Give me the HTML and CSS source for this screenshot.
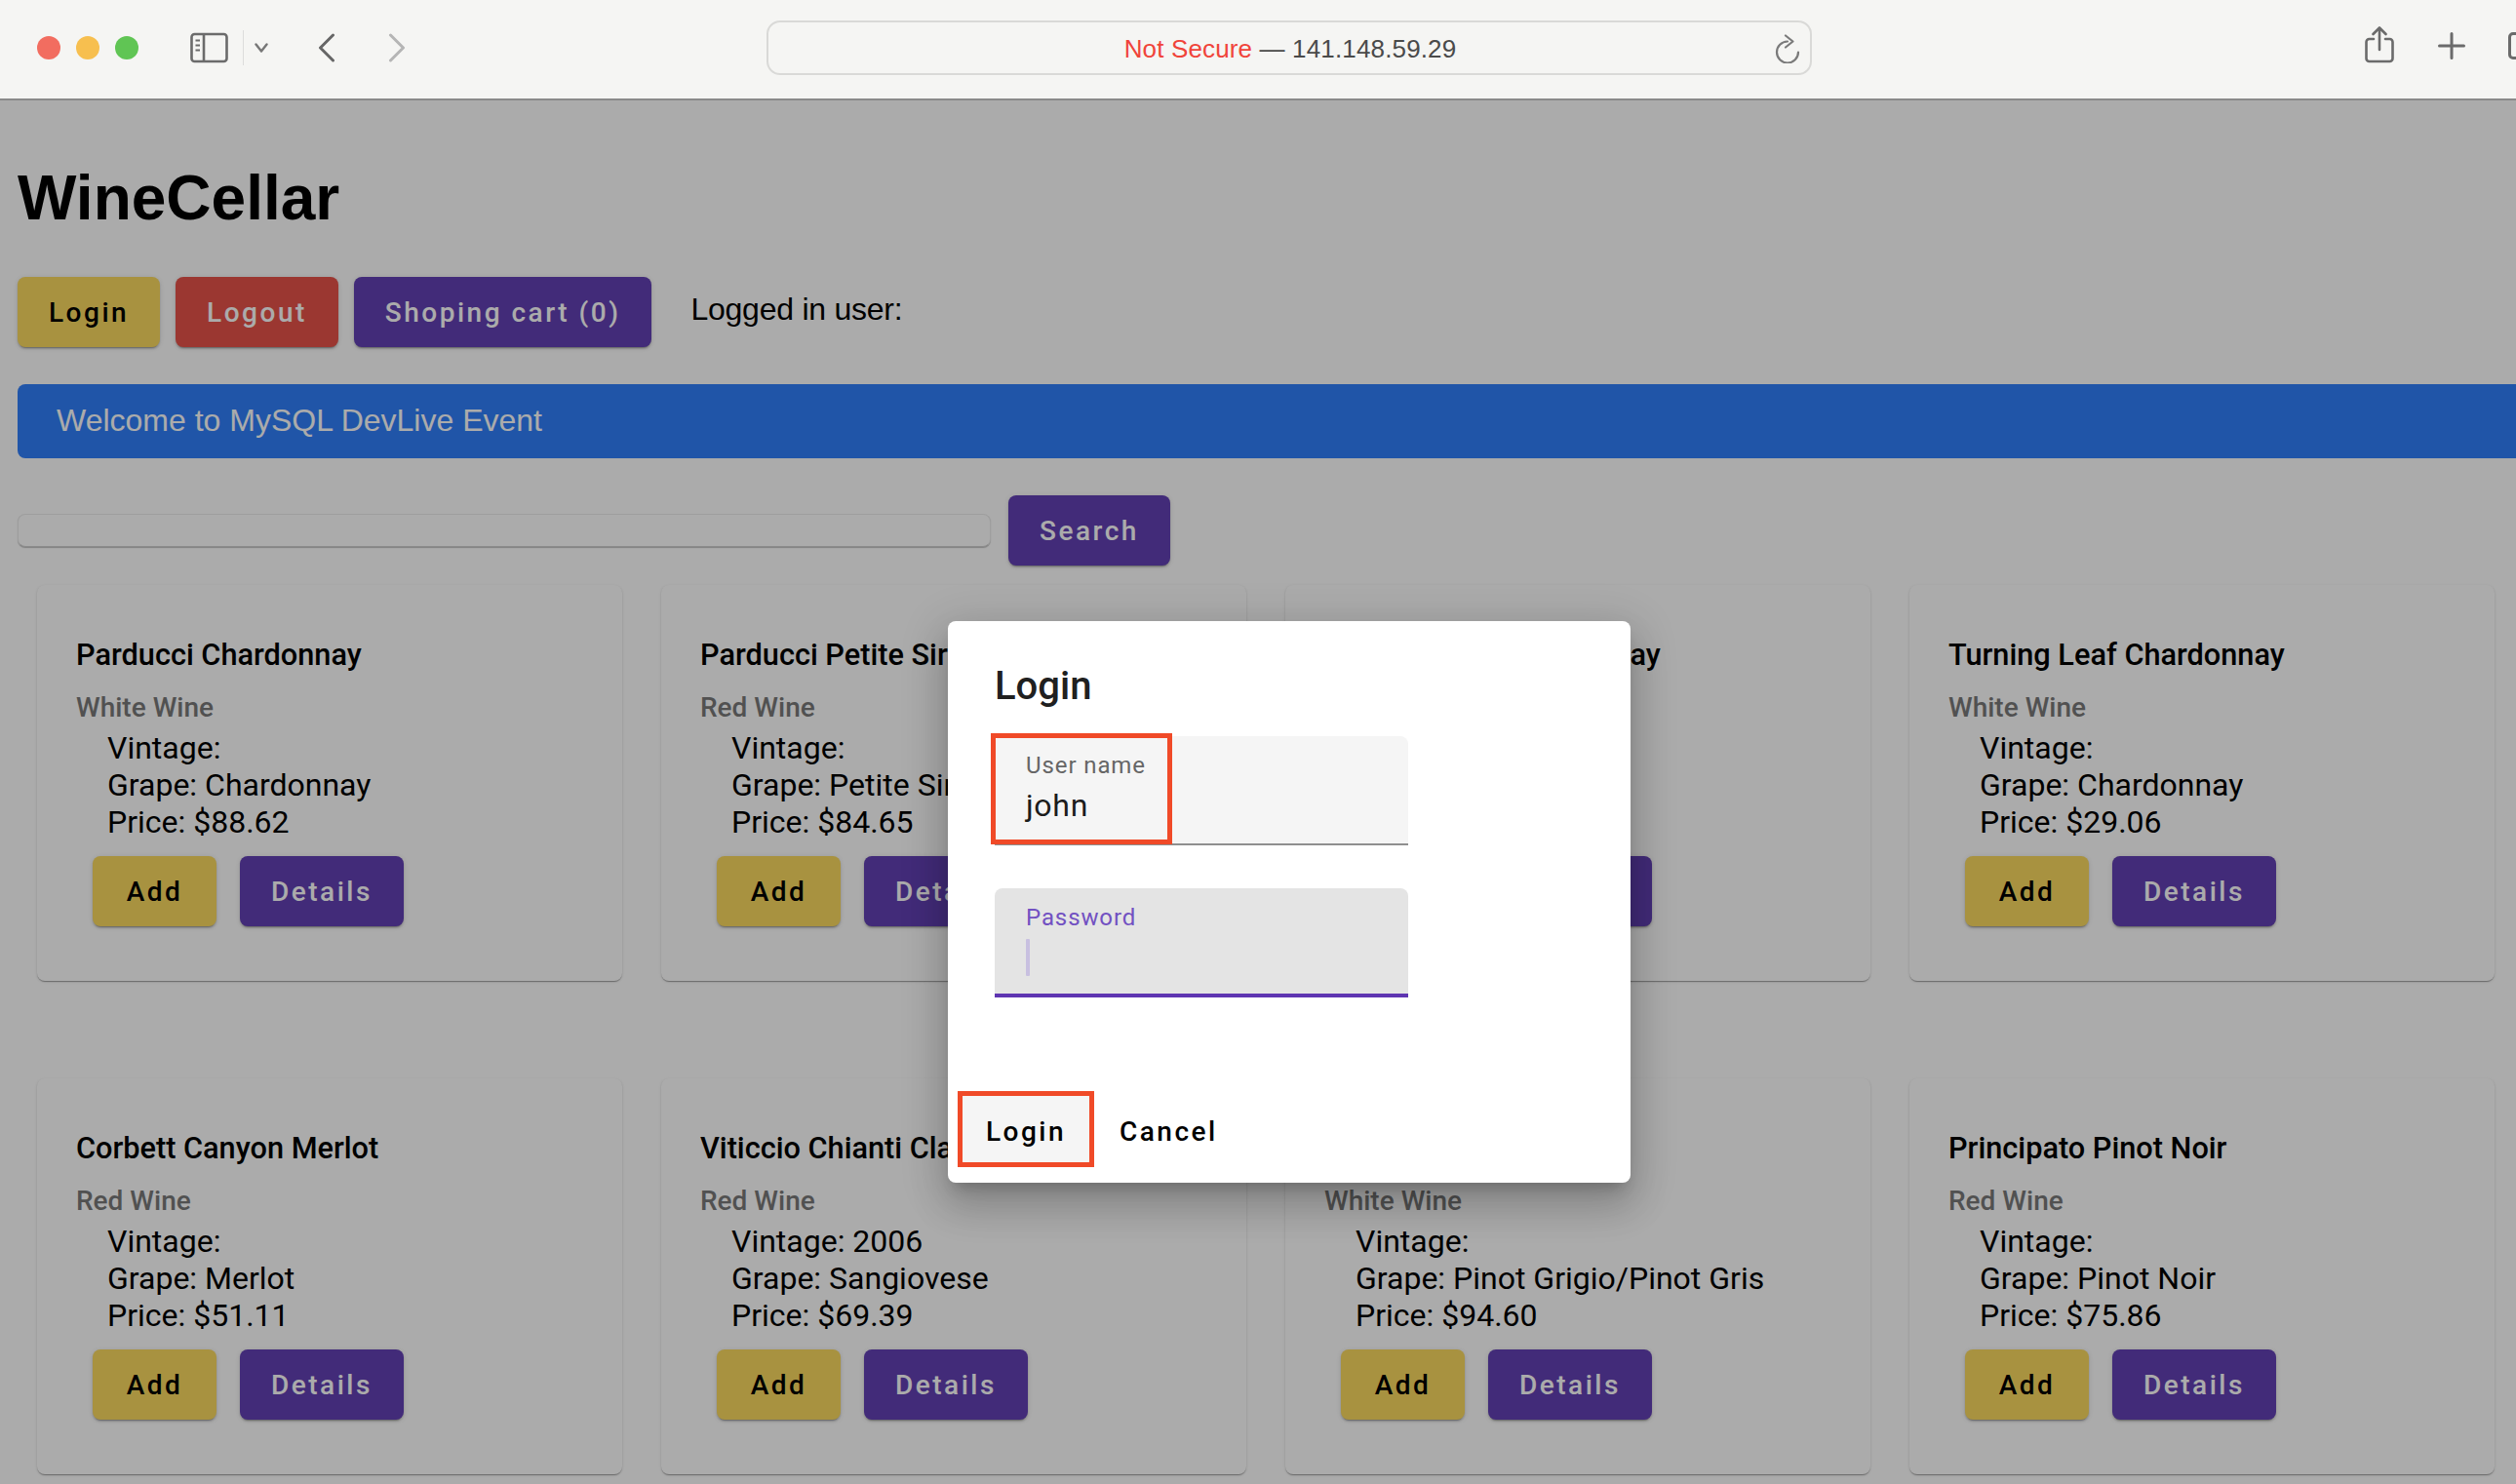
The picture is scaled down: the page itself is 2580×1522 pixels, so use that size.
FILE: index.html
```html
<!DOCTYPE html>
<html>
<head>
<meta http-equiv="Content-Type" content="text/html; charset=utf-8"/>
<title>WineCellar</title>
<link rel="stylesheet" href="styles.css">
</head>
<body>

<div class="toolbar">
  <span class="light red"></span>
  <span class="light yellow"></span>
  <span class="light green"></span>
  <svg class="tb-sidebar" width="40" height="32" viewBox="0 0 40 32" fill="none" stroke="#6b6b6b" stroke-width="2.6">
    <rect x="1.5" y="2" width="36" height="28" rx="3"/>
    <path d="M14 2v28"/>
    <path d="M5.5 8.500h4.500M5.500 13.500h4.500M5.500 18.500h4.500" stroke-width="2"/>
  </svg>
  <span class="tb-divider"></span>
  <svg class="tb-down" width="14" height="10" viewBox="0 0 14 10" fill="none" stroke="#777" stroke-width="2.400" stroke-linecap="round" stroke-linejoin="round">
    <path d="M1.500 1.500L7 8.500l5.500-7"/>
  </svg>
  <svg class="tb-back" width="18" height="30" viewBox="0 0 18 30" fill="none" stroke="#666" stroke-width="3" stroke-linecap="round" stroke-linejoin="round">
    <path d="M15.500 2L2.500 15l13 13"/>
  </svg>
  <svg class="tb-forward" width="18" height="30" viewBox="0 0 18 30" fill="none" stroke="#b5b5b5" stroke-width="3" stroke-linecap="round" stroke-linejoin="round">
    <path d="M2.500 2l13 13-13 13"/>
  </svg>
  <div class="urlbar">
    <span class="url-text"><span class="not-secure">Not Secure</span> — 141.148.59.29</span>
    <svg class="url-reload" width="26" height="30" viewBox="0 0 26 30" fill="none" stroke="#7a7a7a" stroke-width="2.200" stroke-linecap="round" stroke-linejoin="round">
      <path d="M13 7.500A11 11 0 1 0 24 18.500"/>
      <path d="M11 1.500l7.500 6-7.500 6"/>
    </svg>
  </div>
  <svg class="tb-share" width="30" height="38" viewBox="0 0 30 38" fill="none" stroke="#6b6b6b" stroke-width="2.600" stroke-linecap="round" stroke-linejoin="round">
    <path d="M9 13H4.500a3 3 0 0 0-3 3v17a3 3 0 0 0 3 3h21a3 3 0 0 0 3-3V16a3 3 0 0 0-3-3H21"/>
    <path d="M15 24V2M8.500 8L15 1.500 21.500 8"/>
  </svg>
  <svg class="tb-plus" width="28" height="28" viewBox="0 0 28 28" fill="none" stroke="#6b6b6b" stroke-width="3" stroke-linecap="round">
    <path d="M14 1.500v25M1.500 14h25"/>
  </svg>
  <span class="tb-tabs"></span>
</div>

<div class="viewport">
  <div class="page">
    <h1 class="brand">WineCellar</h1>

    <div class="actions">
      <button class="btn gold">Login</button>
      <button class="btn crimson">Logout</button>
      <button class="btn purple">Shoping cart (0)</button>
      <span class="user">Logged in user:</span>
    </div>

    <div class="alert">Welcome to MySQL DevLive Event</div>

    <div class="search">
      <input class="search-input" type="text">
      <button class="btn purple">Search</button>
    </div>

    <div class="wines">
      <div class="card">
        <h2>Parducci Chardonnay</h2>
        <h3>White Wine</h3>
        <div class="facts">Vintage:<br>Grape: Chardonnay<br>Price: $88.62</div>
        <div class="card-btns"><button class="btn gold">Add</button><button class="btn purple">Details</button></div>
      </div>
      <div class="card">
        <h2>Parducci Petite Sirah</h2>
        <h3>Red Wine</h3>
        <div class="facts">Vintage:<br>Grape: Petite Sirah<br>Price: $84.65</div>
        <div class="card-btns"><button class="btn gold">Add</button><button class="btn purple">Details</button></div>
      </div>
      <div class="card">
        <h2>Turning Leaf Chardonnay</h2>
        <h3>White Wine</h3>
        <div class="facts">Vintage:<br>Grape: Chardonnay<br>Price: $29.06</div>
        <div class="card-btns"><button class="btn gold">Add</button><button class="btn purple">Details</button></div>
      </div>
      <div class="card">
        <h2>Turning Leaf Chardonnay</h2>
        <h3>White Wine</h3>
        <div class="facts">Vintage:<br>Grape: Chardonnay<br>Price: $29.06</div>
        <div class="card-btns"><button class="btn gold">Add</button><button class="btn purple">Details</button></div>
      </div>
      <div class="card">
        <h2>Corbett Canyon Merlot</h2>
        <h3>Red Wine</h3>
        <div class="facts">Vintage:<br>Grape: Merlot<br>Price: $51.11</div>
        <div class="card-btns"><button class="btn gold">Add</button><button class="btn purple">Details</button></div>
      </div>
      <div class="card">
        <h2>Viticcio Chianti Classico</h2>
        <h3>Red Wine</h3>
        <div class="facts">Vintage: 2006<br>Grape: Sangiovese<br>Price: $69.39</div>
        <div class="card-btns"><button class="btn gold">Add</button><button class="btn purple">Details</button></div>
      </div>
      <div class="card">
        <h2>Pinot Grigio</h2>
        <h3>White Wine</h3>
        <div class="facts">Vintage:<br>Grape: Pinot Grigio/Pinot Gris<br>Price: $94.60</div>
        <div class="card-btns"><button class="btn gold">Add</button><button class="btn purple">Details</button></div>
      </div>
      <div class="card">
        <h2>Principato Pinot Noir</h2>
        <h3>Red Wine</h3>
        <div class="facts">Vintage:<br>Grape: Pinot Noir<br>Price: $75.86</div>
        <div class="card-btns"><button class="btn gold">Add</button><button class="btn purple">Details</button></div>
      </div>
    </div>

    <div class="scrim">
      <div class="dialog">
        <h2 class="dialog-title">Login</h2>
        <div class="field">
          <label>User name</label>
          <div class="value">john</div>
          <span class="callout callout-user"></span>
        </div>
        <div class="field focused">
          <label>Password</label>
          <div class="value"><span class="caret"></span></div>
        </div>
        <div class="dialog-actions">
          <button class="text-btn marked">Login</button>
          <button class="text-btn">Cancel</button>
        </div>
      </div>
    </div>
  </div>
</div>

</body>
</html>
```

FILE: styles.css
```css
* {
  box-sizing: border-box;
}

html, body {
  margin: 0;
  height: 100%;
  overflow: hidden;
}

body {
  display: flex;
  flex-direction: column;
  background: #fff;
  font-family: "Liberation Sans", Arial, sans-serif;
}

/* browser chrome */
.toolbar {
  flex: none;
  height: 103px;
  display: flex;
  align-items: center;
  background: #f5f5f3;
  border-bottom: 2px solid #8a8a8a;
  padding-bottom: 4px;
  overflow: hidden;
}

.light {
  flex: none;
  width: 24px;
  height: 24px;
  border-radius: 50%;
  margin-right: 16px;
}
.light.red { margin-left: 38px; background: #f26d60; }
.light.yellow { background: #f7bf4f; }
.light.green { background: #60c554; }

.tb-sidebar { flex: none; margin-left: 37px; }
.tb-divider { flex: none; width: 1px; height: 36px; margin-left: 14px; background: #dcdcdc; }
.tb-down { flex: none; margin-left: 11px; }
.tb-back { flex: none; margin-left: 51px; }
.tb-forward { flex: none; margin-left: 54px; }

.urlbar {
  flex: none;
  position: relative;
  width: 1072px;
  height: 56px;
  margin-left: 370px;
  border: 2px solid #d9d9d7;
  border-radius: 14px;
  display: flex;
  align-items: center;
  justify-content: center;
  padding: 4px 0 0 2px;
  font-size: 26px;
  letter-spacing: .15px;
  color: #4a4a4a;
}
.not-secure { color: #f0443a; }
.url-reload { position: absolute; right: 10px; top: 12px; }

.tb-share { flex: none; margin-left: 567px; margin-top: -6px; }
.tb-plus { flex: none; margin-left: 45px; margin-top: -4px; }
.tb-tabs {
  flex: none;
  width: 30px;
  height: 28px;
  margin-left: 44px;
  margin-top: -4px;
  border: 3px solid #6b6b6b;
  border-radius: 5px;
}

/* page, wider than the window like the original */
.viewport {
  flex: 1;
  overflow: hidden;
  position: relative;
}

.page {
  position: relative;
  width: 2644px;
  height: 1419px;
  padding: 0 26px 0 18px;
}

.brand {
  margin: 0;
  padding-top: 63px;
  font-size: 64px;
  line-height: 74px;
  font-weight: bold;
  color: #000;
}

.btn {
  height: 72px;
  min-width: 127px;
  padding: 0 32px;
  border: none;
  border-radius: 8px;
  font-family: Roboto, sans-serif;
  font-size: 28px;
  font-weight: 500;
  letter-spacing: 2.5px;
  box-shadow: 0 3px 1px -2px rgba(0,0,0,.2), 0 2px 2px 0 rgba(0,0,0,.14), 0 1px 5px 0 rgba(0,0,0,.12);
}
.gold { background: #fbda60; color: #000; }
.crimson { background: #e8534a; color: #fff; }
.purple { background: #6340b5; color: #fff; }

.actions {
  display: flex;
  align-items: flex-start;
  gap: 16px;
  margin-top: 44px;
}
.user {
  margin-left: 24px;
  font-size: 32px;
  line-height: 72px;
  letter-spacing: -.25px;
  margin-top: -3px;
  color: #000;
}

.alert {
  height: 76px;
  margin-top: 38px;
  padding: 0 40px;
  border-radius: 8px;
  background: #317ffb;
  color: #fff;
  font-size: 32px;
  line-height: 74px;
}

.search {
  display: flex;
  align-items: center;
  gap: 18px;
  margin-top: 38px;
}
.search-input {
  width: 998px;
  height: 34px;
  border: 1px solid #ececec;
  border-bottom-color: #d0d0d0;
  border-radius: 8px;
  background: #fff;
  box-shadow: 0 1px 1px rgba(0,0,0,.25);
}

.wines {
  display: grid;
  grid-template-columns: repeat(4, 600px);
  column-gap: 40px;
  row-gap: 100px;
  margin: 20px 0 0 20px;
}

.card {
  height: 406px;
  padding: 54px 40px 0;
  background: #fff;
  border-radius: 8px;
  box-shadow: 0 2px 1px -1px rgba(0,0,0,.2), 0 1px 1px 0 rgba(0,0,0,.14), 0 1px 3px 0 rgba(0,0,0,.12);
  font-family: Roboto, sans-serif;
}
.card h2 {
  margin: 0;
  font-size: 30.7px;
  line-height: 36px;
  font-weight: 500;
  color: #000;
}
.card h3 {
  margin: 19px 0 0;
  font-size: 28px;
  line-height: 34px;
  font-weight: 500;
  color: #7a7a7a;
}
.facts {
  margin-top: 5px;
  margin-left: 32px;
  font-size: 32px;
  line-height: 38px;
  color: #000;
}
.card-btns {
  display: flex;
  gap: 24px;
  margin: 16px 0 0 17px;
}

/* login dialog */
.scrim {
  position: absolute;
  inset: 0;
  display: flex;
  justify-content: center;
  align-items: flex-start;
  padding-top: 534px;
  background: rgba(0,0,0,.33);
}

.dialog {
  width: 700px;
  height: 576px;
  padding: 0 48px;
  background: #fff;
  border-radius: 8px;
  box-shadow: 0 11px 15px -7px rgba(0,0,0,.2), 0 24px 38px 3px rgba(0,0,0,.14), 0 9px 46px 8px rgba(0,0,0,.12);
  font-family: Roboto, sans-serif;
}

.dialog-title {
  margin: 0;
  padding-top: 43px;
  font-size: 40px;
  line-height: 48px;
  font-weight: 500;
  color: #202020;
}

.field {
  position: relative;
  width: 424px;
  height: 112px;
  margin-top: 27px;
  padding: 16px 32px 0;
  background: #f5f5f5;
  border-radius: 8px 8px 0 0;
  border-bottom: 2px solid #8f8f8f;
}
.field + .field { margin-top: 44px; }
.field label {
  display: block;
  font-size: 24px;
  line-height: 28px;
  letter-spacing: .9px;
  color: #666;
}
.field .value {
  margin-top: 6px;
  font-size: 32px;
  line-height: 42px;
  letter-spacing: .7px;
  color: #1c1c1c;
}

.field.focused {
  background: #e4e4e4;
  border-bottom: 4px solid #5e35b1;
}
.field.focused label { color: #7251c2; }
.caret {
  display: block;
  width: 4px;
  height: 38px;
  margin-top: 8px;
  background: #c8c0e0;
  border-radius: 1px;
}

/* red marks drawn over the screenshot */
.callout {
  position: absolute;
  left: -4px;
  top: -3px;
  width: 186px;
  height: 114px;
  border: 5px solid #f04a28;
}

.dialog-actions {
  display: flex;
  align-items: center;
  margin: 96px 0 0 -38px;
}
.text-btn {
  height: 72px;
  padding: 4px 26px 0;
  border: none;
  background: none;
  font-family: Roboto, sans-serif;
  font-size: 28px;
  font-weight: 500;
  letter-spacing: 2.5px;
  color: #000;
}
.text-btn.marked {
  width: 140px;
  height: 78px;
  padding: 4px 0 0;
  background: #f5f5f5;
  border: 5px solid #f04a28;
}
```
